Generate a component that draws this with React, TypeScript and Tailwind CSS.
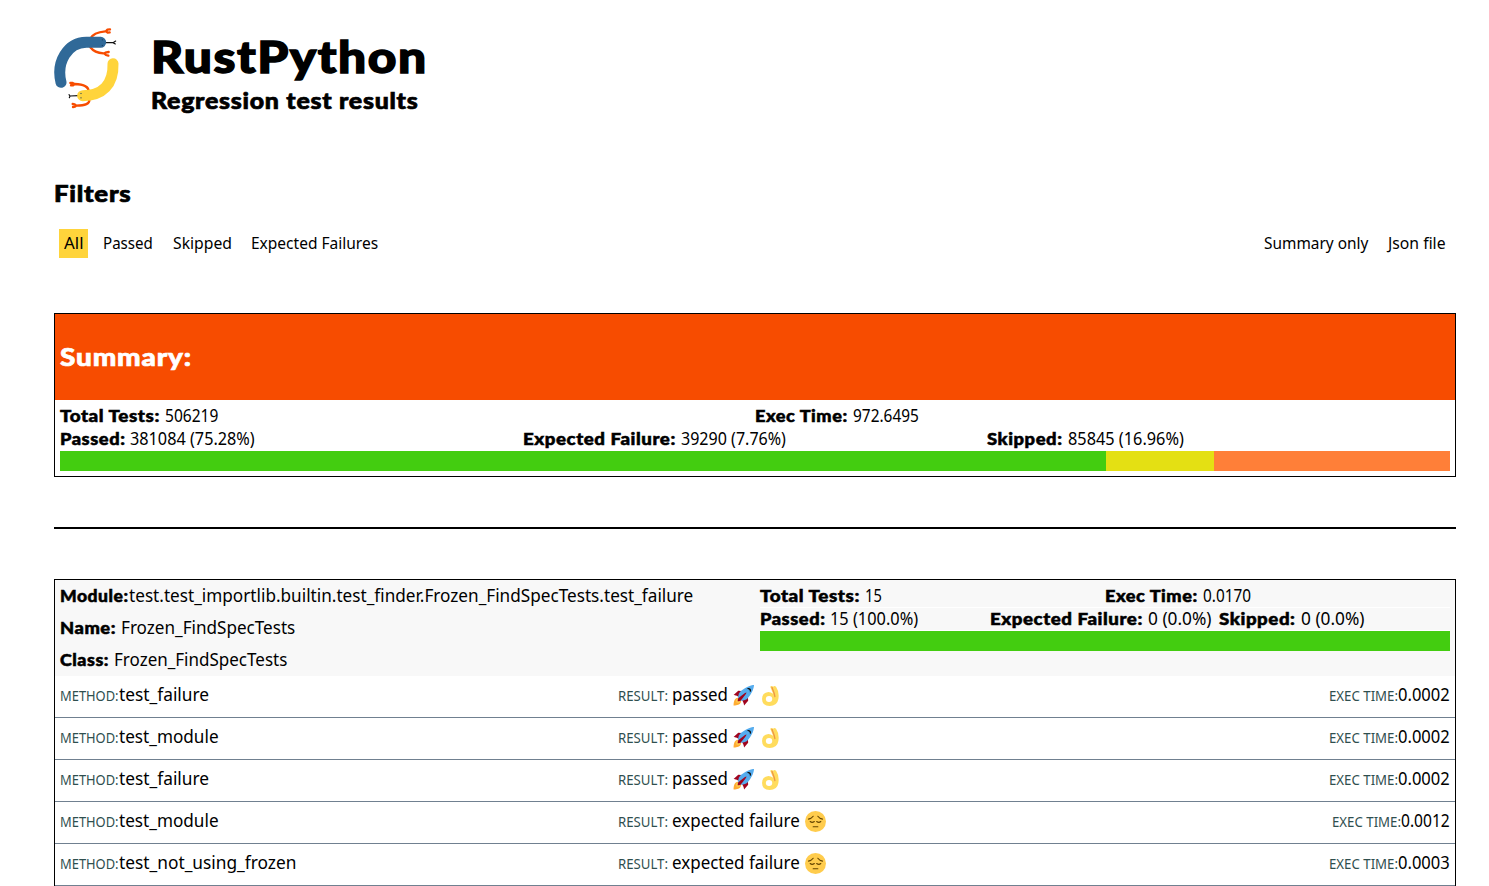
import { useLayoutEffect, useRef, useState, type ReactNode } from "react";

const HEAD = "font-['Lato',sans-serif] font-black tracking-[0.03em]";
const LABEL = `${HEAD} text-[16px] [-webkit-text-stroke:0.5px_currentColor]`;
const BODY = "font-['Noto_Sans',sans-serif]";

/** Single line of text stretched or condensed to an exact width. */
function Fit({ w, className = "", children }: { w: number; className?: string; children: ReactNode }) {
  const ref = useRef<HTMLSpanElement>(null);
  const [scale, setScale] = useState(1);
  useLayoutEffect(() => {
    if (ref.current) setScale(w / ref.current.offsetWidth);
  }, [w]);
  return (
    <span className={`inline-block whitespace-nowrap ${className}`} style={{ width: w }}>
      <span ref={ref} className="inline-block origin-left" style={{ transform: `scaleX(${scale})` }}>
        {children}
      </span>
    </span>
  );
}

function Logo() {
  return (
    <svg className="h-[81px] w-[66px] shrink-0" viewBox="42 39 198 243" fill="none" strokeLinecap="round" strokeLinejoin="round">
      <g stroke="#f74c00" strokeWidth="7">
        <path d="M152 70Q160 52 196 49M210 43L202 44L198 49L203 53L209 52" />
        <path d="M151 97Q164 114 190 115M206 111L199 112L193 115L198 120L205 122" />
        <path d="M146 230Q146 208 104 207M91 204L98 204L104 207L99 211L93 211" />
        <path d="M148 254Q150 272 109 272M98 267L104 268L109 272L105 275L99 276" />
      </g>
      <path d="M196 83H219L227 78M219 83L226 87M115 242L90 243M87 239L90 243L88 248" stroke="#111" strokeWidth="3.5" />
      <path d="M63 202C48 142 82 83 139 82H182" stroke="#306998" strokeWidth="33" />
      <path d="M219 146C221 209 187 242 128 242" stroke="#ffd43b" strokeWidth="33" />
      <path d="M187 74V75M187 91V92M123 235V236M123 248V249" stroke="#173d5d" strokeWidth="3" />
    </svg>
  );
}

function Rocket() {
  return (
    <svg className="size-[21px]" viewBox="0 0 36 36">
      <path fill="#A0041E" d="M1 17l8-7 16 1 1 16-7 8s.001-5.999-6-12-12-6-12-6z" />
      <path fill="#FFAC33" d="M.973 35s-.036-7.979 2.985-11S15 21.187 15 21.187 14.999 29 11.999 32c-3 3-11.026 3-11.026 3z" />
      <circle fill="#FFCC4D" cx="9" cy="27" r="4" />
      <path fill="#55ACEE" d="M36 0S26 0 14 10c-6 5-6 14-4 16s11 2 16-4C36 10 36 0 36 0z" />
      <path fill="#111" d="M27 5c-1.623 0-3.013.971-3.641 2.36.502-.227 1.055-.36 1.641-.36 2.209 0 4 1.791 4 4 0 .586-.133 1.139-.359 1.64C30.03 12.013 31 10.623 31 9c0-2.209-1.791-4-4-4z" />
      <path fill="#A0041E" d="M8 28s0-4 1-5 13.001-10.999 14-10-9.001 13-10.001 14S8 28 8 28z" />
    </svg>
  );
}

function OkHand() {
  return (
    <svg className="h-[21px] w-[17px]" viewBox="0 0 29 36">
      <path fill="#FFDC5D" d="M14 3Q16 0 19 3Q21 0 24 3Q30 12 28 24Q26 36 13 36Q0 36 0 24Q0 13 11 12Q15 12 19 15Z" />
      <path fill="none" stroke="#EF9645" strokeWidth="2.2" strokeLinecap="round" d="M17 4L21 15L22 20" />
      <ellipse cx="12" cy="24" rx="5.5" ry="5" fill="#fff" />
    </svg>
  );
}

function Pensive() {
  return (
    <svg className="size-[21px]" viewBox="0 0 36 36" fill="none" stroke="#664500" strokeWidth="2" strokeLinecap="round">
      <circle cx="18" cy="18" r="18" fill="#FFCC4D" stroke="none" />
      <path d="M6 14Q11 13 14 9M30 14Q25 13 22 9M9 18Q12 21 16 18M20 18Q24 21 27 18M14 27H22" />
    </svg>
  );
}

function Stat({ label, lw, value, vw }: { label: string; lw: number; value: string; vw: number }) {
  return (
    <div className="flex h-[23px] items-baseline gap-[5px] leading-[21px]">
      <Fit w={lw} className={LABEL}>{label}</Fit>
      <Fit w={vw} className={`${BODY} text-[17.3px]`}>{value}</Fit>
    </div>
  );
}

type Row = { name: string; nw: number; ok: boolean; time: string; tw: number };

const rows: Row[] = [
  { name: "test_failure", nw: 90, ok: true, time: "0.0002", tw: 52 },
  { name: "test_module", nw: 100, ok: true, time: "0.0002", tw: 52 },
  { name: "test_failure", nw: 90, ok: true, time: "0.0002", tw: 52 },
  { name: "test_module", nw: 100, ok: false, time: "0.0012", tw: 49 },
  { name: "test_not_using_frozen", nw: 177, ok: false, time: "0.0003", tw: 52 },
];

const KEY = "text-[14px] text-[#2f4f4f]";
const VALUE = "text-[17.5px]";

function MethodRow({ name, nw, ok, time, tw }: Row) {
  return (
    <div className="flex h-[42px] items-start border-b border-[#708090] px-[5px] pt-1 leading-7">
      <div className="flex w-[558px] items-baseline">
        <Fit w={59} className={KEY}>METHOD:</Fit>
        <Fit w={nw} className={VALUE}>{name}</Fit>
      </div>
      <div className="flex flex-1 items-baseline">
        <Fit w={50} className={KEY}>RESULT:</Fit>
        <Fit w={ok ? 56 : 128} className={`ml-1 ${VALUE}`}>{ok ? "passed" : "expected failure"}</Fit>
        <span className="ml-[5px] flex items-center gap-2 self-center">
          {ok ? <><Rocket /><OkHand /></> : <Pensive />}
        </span>
      </div>
      <div className="flex items-baseline">
        <Fit w={69} className={KEY}>EXEC TIME:</Fit>
        <Fit w={tw} className={VALUE}>{time}</Fit>
      </div>
    </div>
  );
}

export default function App() {
  return (
    <div className={`h-[886px] overflow-hidden bg-white pr-[33px] pl-[54px] text-black ${BODY}`}>
      <header className="flex pt-7">
        <Logo />
        <div className="ml-[31px] flex flex-col">
          <h1 className="h-[58px] leading-[56px]"><Fit w={277} className={`${HEAD} text-[44.5px] [-webkit-text-stroke:1.4px_currentColor]`}>RustPython</Fit></h1>
          <h2 className="h-[30px] leading-[30px]"><Fit w={268} className={`${HEAD} text-[22px] [-webkit-text-stroke:0.7px_currentColor]`}>Regression test results</Fit></h2>
        </div>
      </header>

      <h2 className="mt-[63px] h-[30px] leading-[30px]"><Fit w={77} className={`${HEAD} text-[22px] [-webkit-text-stroke:0.7px_currentColor]`}>Filters</Fit></h2>
      <nav className="mt-5 flex h-[29px] pr-[10px] pl-[5px] text-[16px] leading-[29px]">
        <span className="bg-[#ffd43b] px-[5px]"><Fit w={19}>All</Fit></span>
        <Fit w={50} className="ml-[15px]">Passed</Fit>
        <Fit w={59} className="ml-[19.5px]">Skipped</Fit>
        <Fit w={127} className="ml-[19.5px]">Expected Failures</Fit>
        <Fit w={104} className="ml-auto">Summary only</Fit>
        <Fit w={58} className="ml-5">Json file</Fit>
      </nav>

      <section className="mt-[55px] h-[164px] border border-black">
        <div className="h-[86px] bg-[#f74c00] px-[5px] leading-[84px] text-white">
          <Fit w={132} className={`${HEAD} text-[25px] [-webkit-text-stroke:0.7px_currentColor]`}>Summary:</Fit>
        </div>
        <div className="p-[5px]">
          <div className="grid grid-cols-2">
            <Stat label="Total Tests:" lw={100} value="506219" vw={53} />
            <Stat label="Exec Time:" lw={93} value="972.6495" vw={66} />
          </div>
          <div className="grid grid-cols-3">
            <Stat label="Passed:" lw={65} value="381084 (75.28%)" vw={125} />
            <Stat label="Expected Failure:" lw={153} value="39290 (7.76%)" vw={105} />
            <Stat label="Skipped:" lw={76} value="85845 (16.96%)" vw={116} />
          </div>
          <div className="flex h-5">
            <div className="w-[1046px] bg-[#43cd10]" />
            <div className="w-[108px] bg-[#e4e013]" />
            <div className="flex-1 bg-[#ff7f38]" />
          </div>
        </div>
      </section>

      <hr className="my-[50px] border-t-2 border-black" />

      <section className="border border-black">
        <div className="flex h-24 bg-[#f8f8f8] px-[5px]">
          <div className="-mt-px flex w-[700px] flex-col leading-8">
            <div className="flex h-8 items-baseline">
              <Fit w={69} className={LABEL}>Module:</Fit>
              <Fit w={564} className={VALUE}>test.test_importlib.builtin.test_finder.Frozen_FindSpecTests.test_failure</Fit>
            </div>
            <div className="flex h-8 items-baseline gap-[5px]">
              <Fit w={56} className={LABEL}>Name:</Fit>
              <Fit w={174} className={VALUE}>Frozen_FindSpecTests</Fit>
            </div>
            <div className="flex h-8 items-baseline gap-[5px]">
              <Fit w={49} className={LABEL}>Class:</Fit>
              <Fit w={173} className={VALUE}>Frozen_FindSpecTests</Fit>
            </div>
          </div>
          <div className="flex-1 pt-[5px]">
            <div className="grid grid-cols-2 shadow-[inset_0_-1px_0_#fff]">
              <Stat label="Total Tests:" lw={100} value="15" vw={17} />
              <Stat label="Exec Time:" lw={93} value="0.0170" vw={48} />
            </div>
            <div className="grid grid-cols-[230px_229px_231px] shadow-[inset_0_-1px_0_#fff]">
              <Stat label="Passed:" lw={65} value="15 (100.0%)" vw={88} />
              <Stat label="Expected Failure:" lw={153} value="0 (0.0%)" vw={64} />
              <Stat label="Skipped:" lw={77} value="0 (0.0%)" vw={64} />
            </div>
            <div className="h-5 bg-[#43cd10]" />
          </div>
        </div>
        {rows.map((r, i) => <MethodRow key={i} {...r} />)}
      </section>
    </div>
  );
}
